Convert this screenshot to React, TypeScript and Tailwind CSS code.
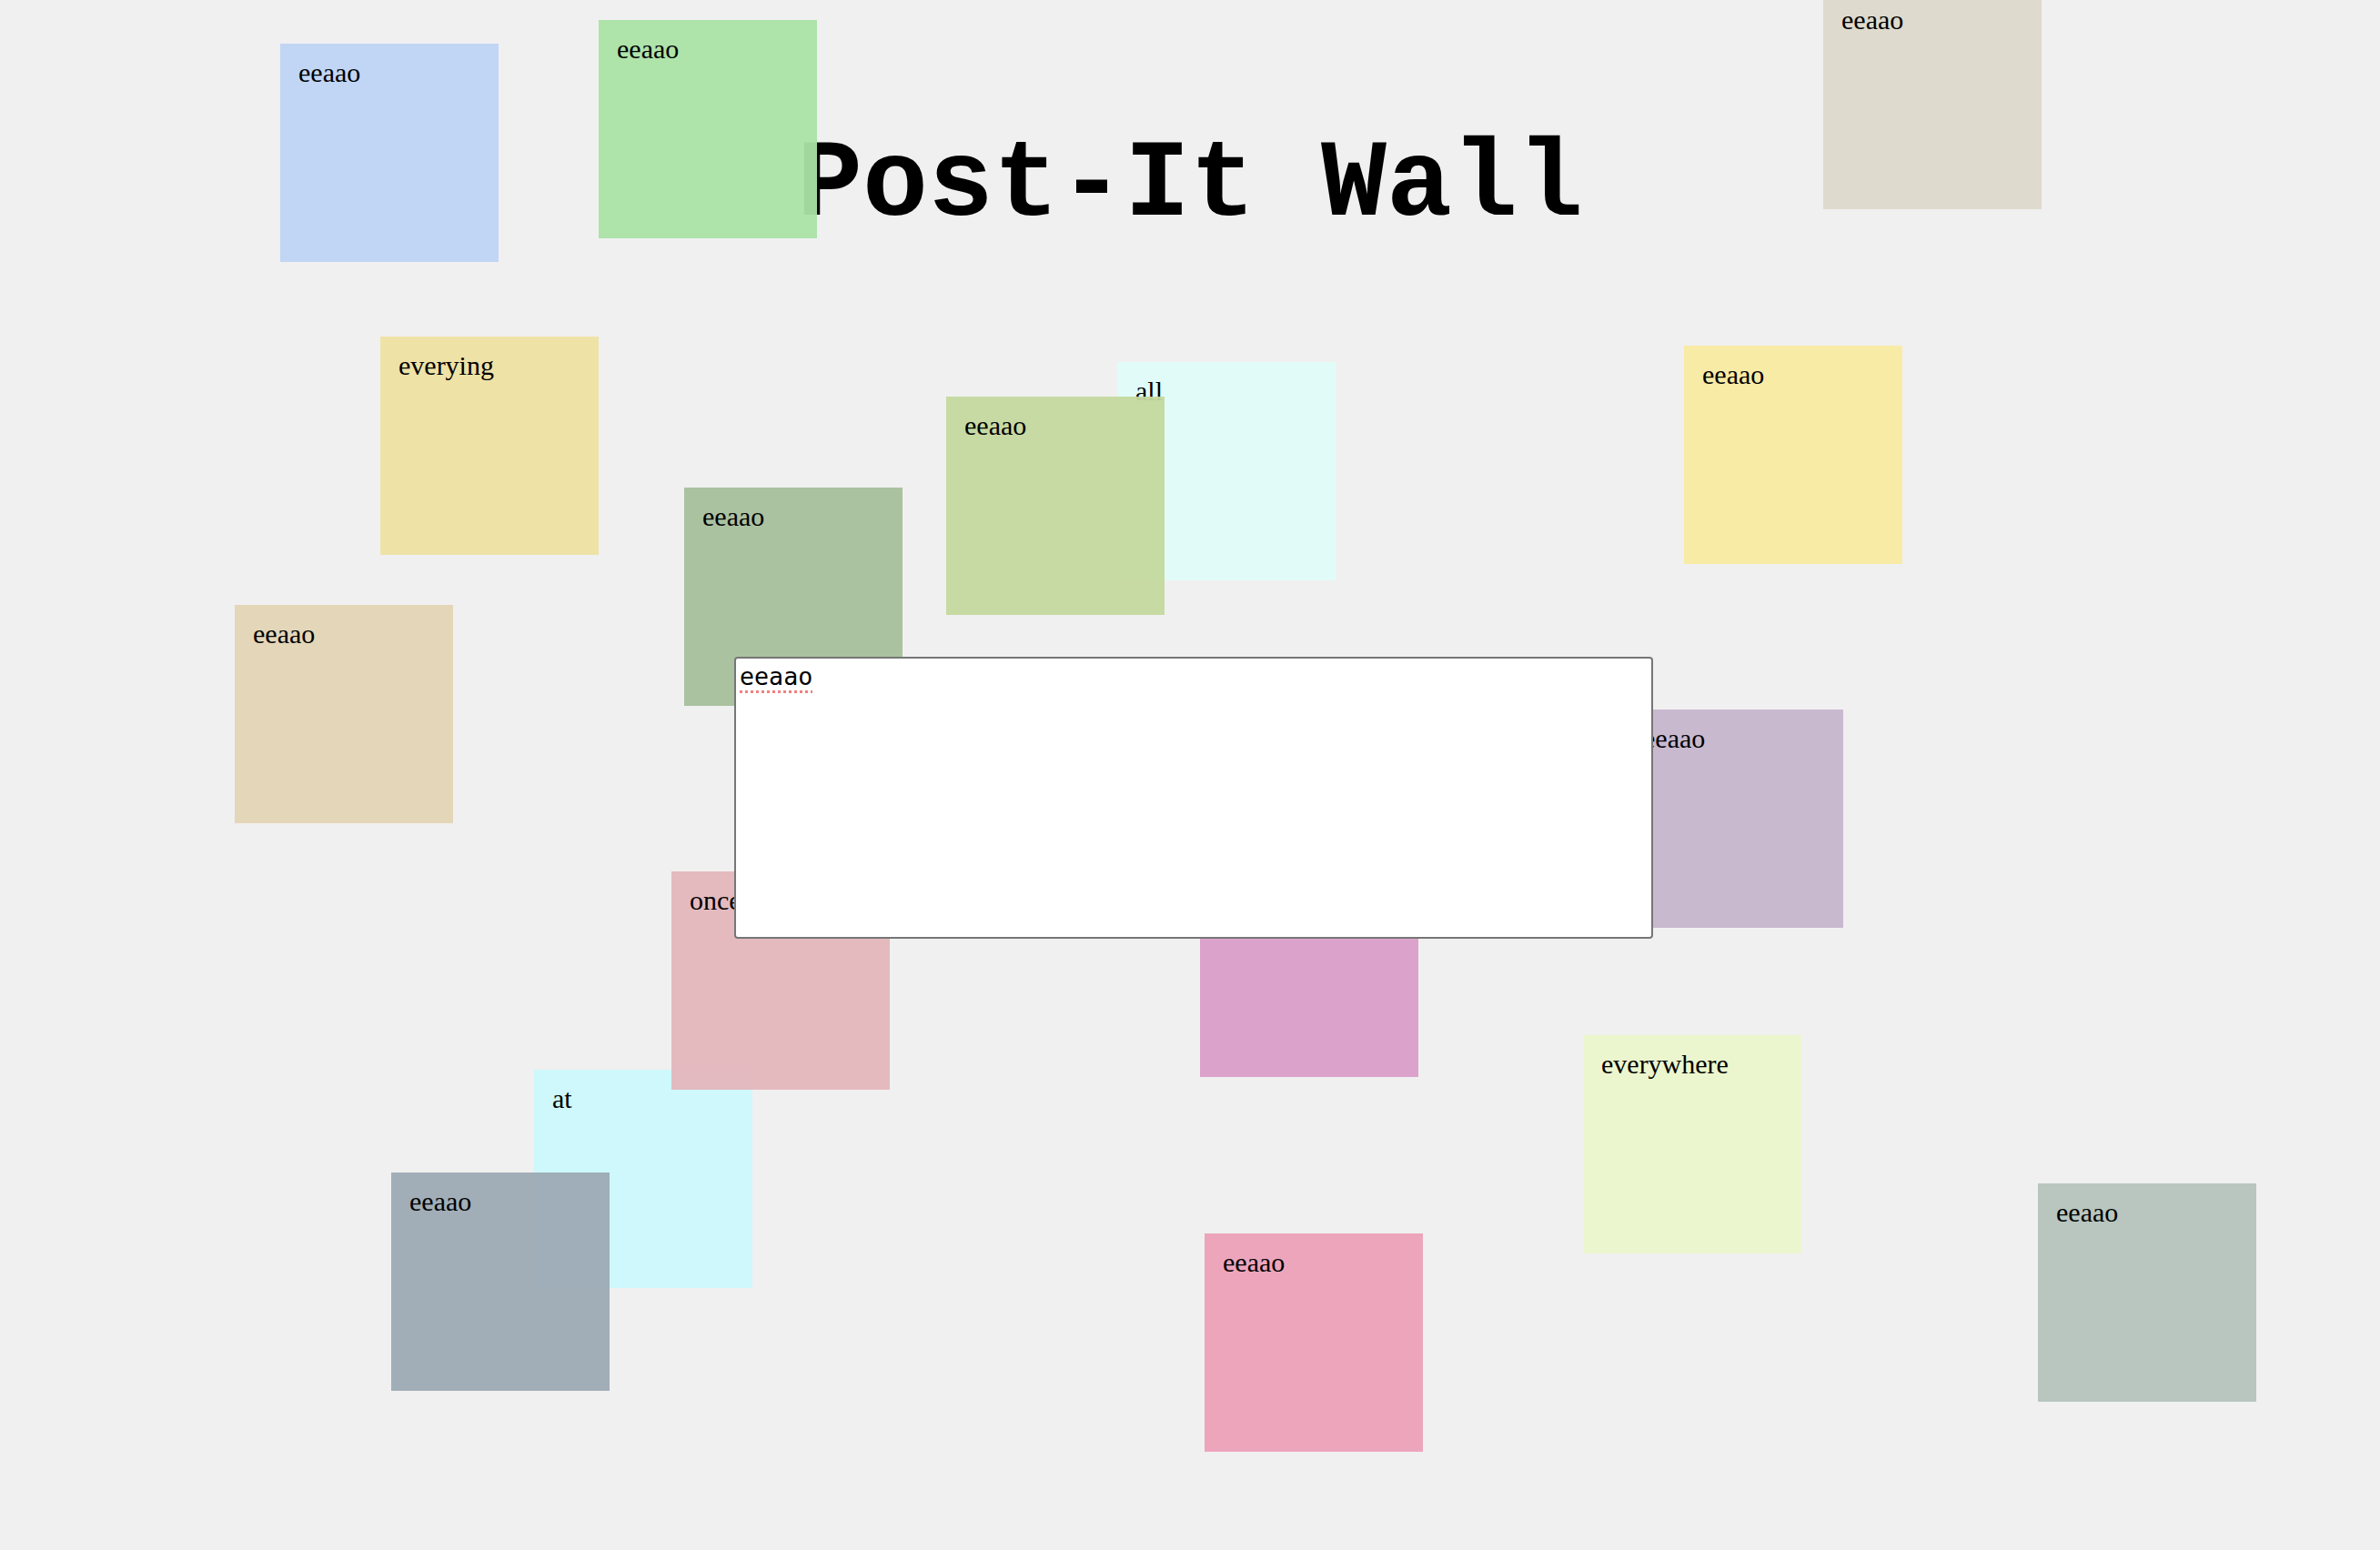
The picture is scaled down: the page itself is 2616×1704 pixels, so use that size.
import React from "react";

type Note = { x: number; y: number; bg: string; text: string };

const notes: Note[] = [
  { x: 308, y: 48, bg: "bg-[#bed4f4f2]", text: "eeaao" },
  { x: 658, y: 22, bg: "bg-[#aae2a5f2]", text: "eeaao" },
  { x: 2004, y: -10, bg: "bg-[#dcd8caf2]", text: "eeaao" },
  { x: 418, y: 370, bg: "bg-[#ede0a2f2]", text: "everying" },
  { x: 1228, y: 398, bg: "bg-[#dffcf8f2]", text: "all" },
  { x: 1040, y: 436, bg: "bg-[#c4d89ef2]", text: "eeaao" },
  { x: 1851, y: 380, bg: "bg-[#f8eaa0f2]", text: "eeaao" },
  { x: 752, y: 536, bg: "bg-[#a7bf9cf2]", text: "eeaao" },
  { x: 258, y: 665, bg: "bg-[#e3d4b5f2]", text: "eeaao" },
  { x: 1786, y: 780, bg: "bg-[#c6b5ccf2]", text: "eeaao" },
  { x: 1319, y: 944, bg: "bg-[#d99ec9f2]", text: "eeaao" },
  { x: 587, y: 1176, bg: "bg-[#cbf8fbf2]", text: "at" },
  { x: 738, y: 958, bg: "bg-[#e3b6bcf2]", text: "once" },
  { x: 430, y: 1289, bg: "bg-[#9caab4f2]", text: "eeaao" },
  { x: 1740, y: 1138, bg: "bg-[#ebf5cbf2]", text: "everywhere" },
  { x: 1324, y: 1356, bg: "bg-[#eca0b8f2]", text: "eeaao" },
  { x: 2240, y: 1301, bg: "bg-[#b4c3bcf2]", text: "eeaao" },
];

function StickyNote({ note }: { note: Note }) {
  return (
    <div
      className={`absolute w-[240px] h-[240px] px-[20px] pt-[15px] text-black text-[30px] leading-[normal] font-['Liberation_Serif','Times_New_Roman',serif] ${note.bg}`}
      style={{ left: note.x, top: note.y }}
    >
      {note.text}
    </div>
  );
}

export default function App() {
  return (
    <div className="relative w-full h-[1704px] overflow-hidden bg-[#f0f0f0]">
      <h1 className="m-0 pt-[136px] text-center text-[120px] leading-[136px] font-bold text-black font-['Liberation_Mono','Courier_New',monospace]">
        Post-It Wall
      </h1>
      {notes.map((n, i) => (
        <StickyNote key={i} note={n} />
      ))}
      <textarea
        spellCheck={false}
        defaultValue="eeaao"
        className="absolute left-[807px] top-[722px] w-[1010px] h-[310px] resize-none bg-white border-2 border-[#767676] rounded-[4px] p-[4px] text-[26.67px] leading-[normal] text-black outline-none underline decoration-dotted decoration-[#f08080] decoration-[3px] underline-offset-[6px] font-['DejaVu_Sans_Mono',monospace]"
      />
    </div>
  );
}
